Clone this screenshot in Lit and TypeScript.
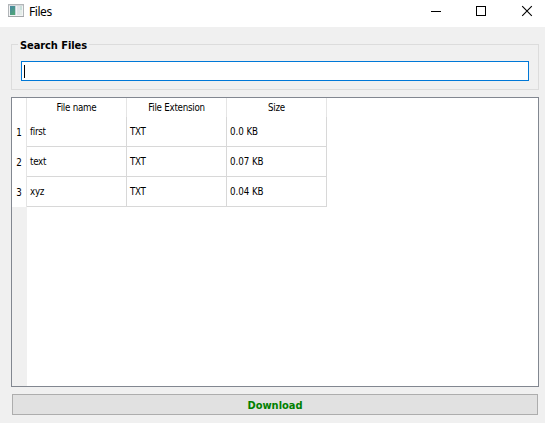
import { LitElement, html, css } from "lit";
import { customElement, property } from "lit/decorators.js";

interface FileRow {
  name: string;
  ext: string;
  size: string;
}

const FILES: FileRow[] = [
  { name: "first", ext: "TXT", size: "0.0 KB" },
  { name: "text", ext: "TXT", size: "0.07 KB" },
  { name: "xyz", ext: "TXT", size: "0.04 KB" },
];

@customElement("title-bar")
class TitleBar extends LitElement {
  static styles = css`
    :host {
      display: flex;
      height: 27px;
      background: #fff;
      font: 12px/24px "Noto Sans", sans-serif;
      color: #000;
    }
    .app-icon {
      margin: 3px 0 0 8px;
      flex: none;
    }
    .title {
      flex: 1;
      margin-left: 5px;
      letter-spacing: -0.45px;
    }
    .controls {
      flex: none;
      display: block;
    }
  `;
  render() {
    return html`
      <svg class="app-icon" width="16" height="15" viewBox="0 0 16 15" shape-rendering="crispEdges">
        <defs>
          <linearGradient id="g" x1="0" y1="0" x2="0.6" y2="1">
            <stop offset="0" stop-color="#4585a5" />
            <stop offset="1" stop-color="#4fa478" />
          </linearGradient>
        </defs>
        <rect x="0" y="1" width="16" height="13" fill="#b2b6b9" />
        <rect x="1" y="2" width="14" height="1" fill="#d6d9dc" />
        <rect x="1" y="3" width="14" height="10" fill="#f3f4f5" />
        <rect x="2" y="3" width="5" height="9" fill="url(#g)" />
        <rect x="7" y="3" width="1" height="9" fill="#c3d3dc" />
        <rect x="9" y="3" width="3" height="9" fill="#e0e5e9" />
        <rect x="12" y="3" width="2" height="4" fill="#c9e0db" />
        <rect x="12" y="7" width="2" height="5" fill="#e3ece8" />
        <rect x="0" y="13" width="16" height="1" fill="#a4a7aa" />
      </svg>
      <div class="title">Files</div>
      <svg class="controls" width="125" height="27" viewBox="0 0 125 27" fill="none" stroke="#000">
        <path d="M11 11.5h10" />
        <rect x="56.5" y="6.5" width="9" height="9" />
        <path d="M102.2 6.2l9.6 9.6M111.8 6.2l-9.6 9.6" stroke-width="1.1" />
      </svg>
    `;
  }
}

@customElement("file-table")
class FileTable extends LitElement {
  @property({ attribute: false }) files: FileRow[] = [];

  static styles = css`
    :host {
      display: block;
      box-sizing: border-box;
      border: 1px solid #828790;
      background: #fff;
      font: 9.7px/12px "DejaVu Sans Condensed", "DejaVu Sans", sans-serif;
      font-stretch: condensed;
      letter-spacing: -0.25px;
      color: #000;
    }
    .layout {
      display: grid;
      grid-template-columns: 15px 1fr;
      height: 100%;
    }
    .gutter {
      background: #f0f0f0;
    }
    .corner {
      height: 19px;
      background: #fff;
      border-right: 1px solid #e5e5e5;
    }
    .index {
      height: 30px;
      line-height: 32px;
      background: #fff;
      text-align: center;
      border-right: 1px solid #e5e5e5;
    }
    .grid {
      display: grid;
      grid-template-columns: repeat(3, 100px);
      grid-template-rows: 19px repeat(3, 30px);
      align-content: start;
    }
    .head {
      border-right: 1px solid #e5e5e5;
      line-height: 20px;
      text-align: center;
    }
    .cell {
      border-right: 1px solid #d8d8d8;
      border-bottom: 1px solid #d8d8d8;
      line-height: 29px;
      padding-left: 3px;
    }
    .size {
      letter-spacing: -0.05px;
    }
  `;
  render() {
    return html`
      <div class="layout">
        <div class="gutter">
          <div class="corner"></div>
          ${this.files.map((_, i) => html`<div class="index">${i + 1}</div>`)}
        </div>
        <div class="grid">
          <div class="head">File name</div>
          <div class="head">File Extension</div>
          <div class="head">Size</div>
          ${this.files.map(
            (f) => html`
              <div class="cell">${f.name}</div>
              <div class="cell">${f.ext}</div>
              <div class="cell size">${f.size}</div>
            `
          )}
        </div>
      </div>
    `;
  }
}

@customElement("app-root")
class AppRoot extends LitElement {
  static styles = css`
    :host {
      display: flex;
      flex-direction: column;
      height: 423px;
      background: #f0f0f0;
      overflow: hidden;
    }
    .group {
      box-sizing: border-box;
      height: 46px;
      margin: 17px 6px 0 11px;
      border: 1px solid #dcdcdc;
      padding: 0 9px;
    }
    .legend {
      width: max-content;
      height: 16px;
      margin: -8px 0 0 -3px;
      padding: 0 2px;
      background: #f0f0f0;
      font: bold 11px/17px "DejaVu Sans Condensed", "DejaVu Sans", sans-serif;
      font-stretch: condensed;
      letter-spacing: -0.08px;
    }
    .field {
      box-sizing: border-box;
      height: 20px;
      margin-top: 8px;
      border: 1px solid #0078d7;
      background: #fff;
      padding: 3px 0 0 2px;
    }
    .caret {
      width: 1px;
      height: 13px;
      background: #000;
    }
    file-table {
      height: 290px;
      margin: 7px 6px 0 11px;
    }
    .download {
      box-sizing: border-box;
      height: 21px;
      margin: 7px 7px 0 12px;
      padding: 2px 0 0;
      border: 1px solid #adadad;
      border-radius: 0;
      background: #e1e1e1;
      color: #008000;
      font: bold 11px/17px "DejaVu Sans Condensed", "DejaVu Sans", sans-serif;
      font-stretch: condensed;
      text-align: center;
    }
  `;
  render() {
    return html`
      <title-bar></title-bar>
      <div class="group">
        <div class="legend">Search Files</div>
        <div class="field"><div class="caret"></div></div>
      </div>
      <file-table .files=${FILES}></file-table>
      <button class="download">Download</button>
    `;
  }
}
